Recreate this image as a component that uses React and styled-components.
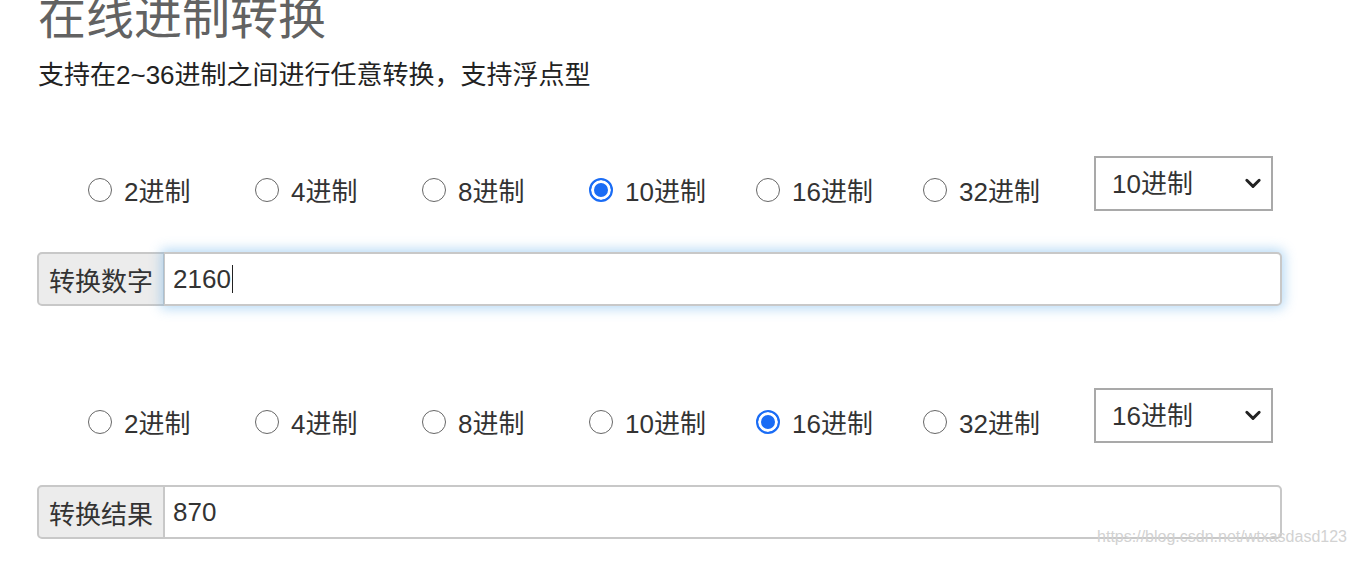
import React from "react";
import styled, { createGlobalStyle } from "styled-components";

const GlobalStyle = createGlobalStyle`
  html, body {
    margin: 0;
    padding: 0;
    background: #fff;
    overflow: hidden;
  }
  body {
    font-family: "Liberation Sans", "Noto Sans CJK SC", sans-serif;
    color: #333;
  }
`;

const Page = styled.div`
  position: relative;
  width: 1356px;
  height: 564px;
  padding-left: 37px;
  box-sizing: border-box;
`;

const Container = styled.div`
  width: 1245px;
`;

const Title = styled.h1`
  margin: -10px 0 0 1px;
  font-size: 48px;
  line-height: 56px;
  font-weight: 400;
  color: #626262;
`;

const Subtitle = styled.p`
  margin: 14px 0 0 1px;
  font-size: 26px;
  line-height: 30px;
  color: #222;
`;

const RadioRow = styled.div`
  display: flex;
  align-items: center;
  height: 55px;
  padding-left: 51px;
  margin-top: ${(p) => p.$top}px;
`;

const RadioItem = styled.label`
  display: flex;
  align-items: center;
  gap: 12px;
  width: 167px;
  font-size: 26px;
  color: #333;
  margin-top: 12px;
`;

const RadioDot = styled.span`
  box-sizing: border-box;
  flex: none;
  width: 24px;
  height: 24px;
  border-radius: 50%;
  border: ${(p) => (p.$checked ? "2px solid #1a6cf5" : "1.6px solid #676767")};
  background: ${(p) => (p.$checked ? "#1a6cf5" : "#fff")};
  box-shadow: ${(p) => (p.$checked ? "inset 0 0 0 3px #fff" : "none")};
`;

const Select = styled.div`
  box-sizing: border-box;
  width: 179px;
  height: 55px;
  margin-left: 4px;
  border: 2px solid #a9a9a9;
  display: flex;
  align-items: center;
  justify-content: space-between;
  padding: 0 9px 5px 16px;
  font-size: 26px;
  color: #333;
`;

const Chevron = styled.svg`
  width: 18px;
  height: 18px;
  margin-top: 4px;
`;

const InputGroup = styled.div`
  display: flex;
  height: 54px;
  margin-top: ${(p) => p.$top}px;
`;

const Addon = styled.div`
  box-sizing: border-box;
  width: 127px;
  display: flex;
  align-items: center;
  justify-content: center;
  background: #ececec;
  border: 2px solid #c8c8c8;
  border-right-width: 1px;
  border-radius: 5px 0 0 5px;
  font-size: 26px;
  color: #333;
`;

const Field = styled.div`
  box-sizing: border-box;
  flex: 1;
  display: flex;
  align-items: center;
  padding-left: 8px;
  background: #fff;
  border: 2px solid #c8c8c8;
  border-left-width: 1px;
  border-radius: 0 5px 5px 0;
  font-size: 26px;
  color: #333;
  box-shadow: ${(p) =>
    p.$focused ? "0 0 12px 3px rgba(102, 175, 233, 0.45)" : "none"};
`;

const Caret = styled.span`
  display: inline-block;
  width: 1.5px;
  height: 28px;
  background: #222;
  margin-left: 1px;
`;

const Watermark = styled.div`
  position: absolute;
  right: 9px;
  bottom: 8px;
  font-size: 16px;
  color: #d2d2d2;
`;

const bases = [2, 4, 8, 10, 16, 32];

function BaseRow({ selected, top }) {
  return (
    <RadioRow $top={top}>
      {bases.map((b) => (
        <RadioItem key={b}>
          <RadioDot $checked={b === selected} />
          {b}进制
        </RadioItem>
      ))}
      <Select>
        {selected}进制
        <Chevron viewBox="0 0 16 16">
          <path d="M2.5 5.5 L8 11 L13.5 5.5" fill="none" stroke="#222" strokeWidth="2.6" strokeLinecap="round" strokeLinejoin="round" />
        </Chevron>
      </Select>
    </RadioRow>
  );
}

export default function App() {
  return (
    <Page>
      <GlobalStyle />
      <Container>
        <Title>在线进制转换</Title>
        <Subtitle>支持在2~36进制之间进行任意转换，支持浮点型</Subtitle>
        <BaseRow selected={10} top={66} />
        <InputGroup $top={41}>
          <Addon>转换数字</Addon>
          <Field $focused>
            2160
            <Caret />
          </Field>
        </InputGroup>
        <BaseRow selected={16} top={82} />
        <InputGroup $top={42}>
          <Addon>转换结果</Addon>
          <Field>870</Field>
        </InputGroup>
      </Container>
      <Watermark>https://blog.csdn.net/wtxasdasd123</Watermark>
    </Page>
  );
}
